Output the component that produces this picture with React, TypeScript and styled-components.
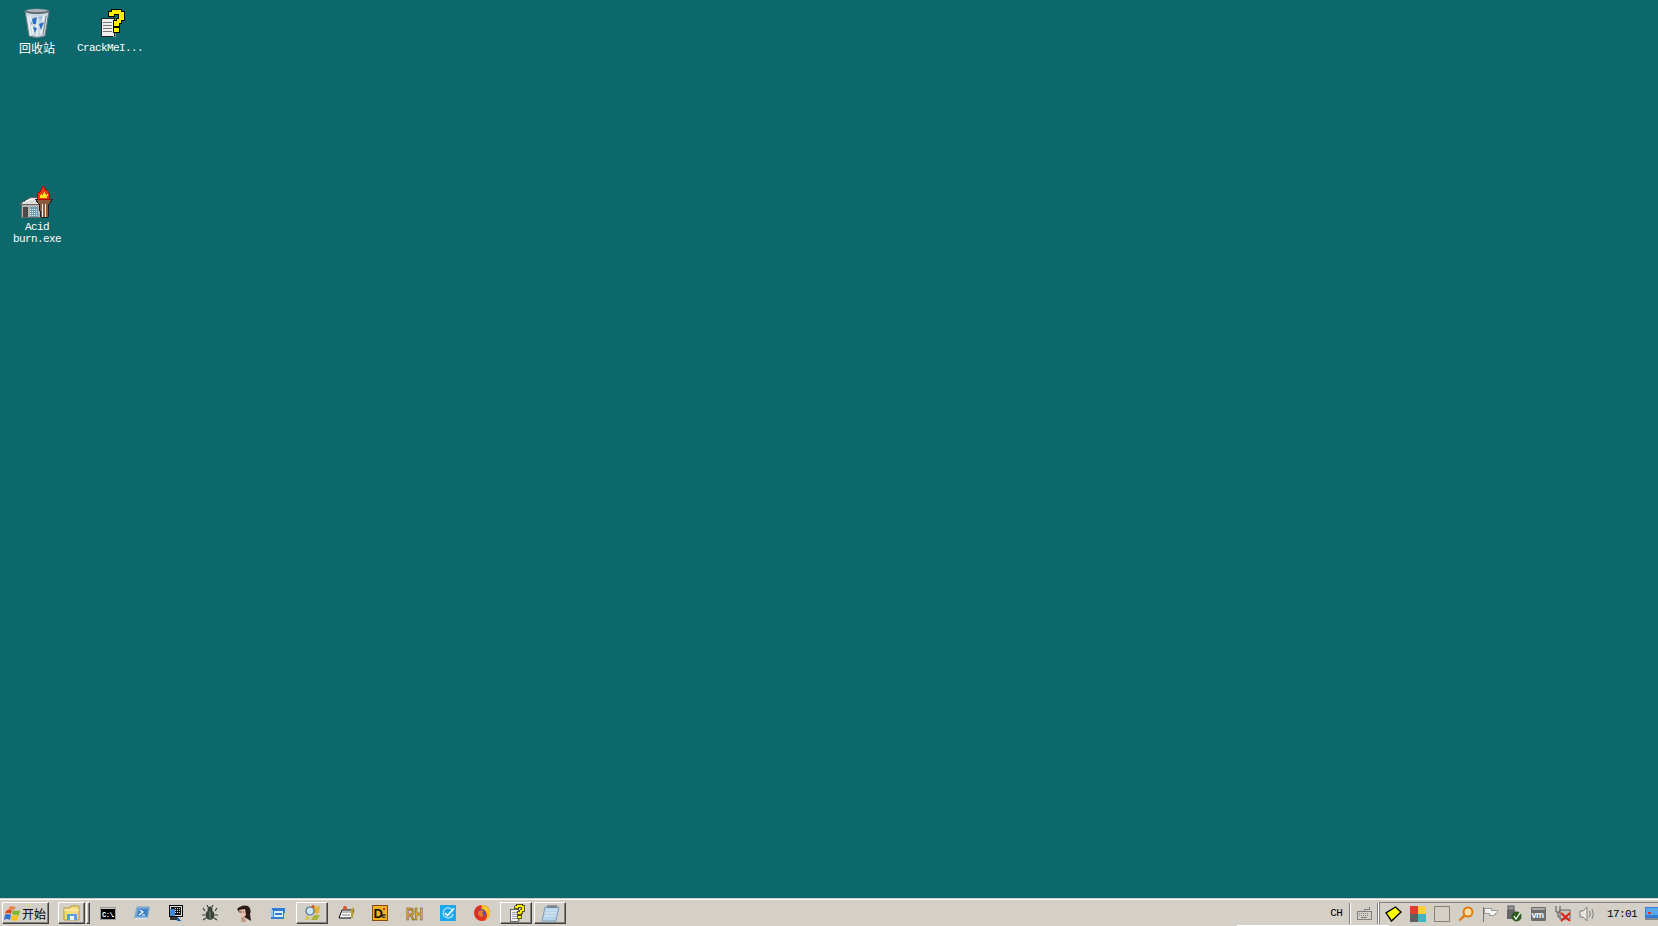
import React from 'react';
import styled, { createGlobalStyle } from 'styled-components';

const GlobalStyle = createGlobalStyle`
	html, body {
		margin: 0;
		height: 100%;
		overflow: hidden;
	}
	#root {
		height: 100%;
	}
`;

const Screen = styled.div`
	display: flex;
	flex-direction: column;
	width: 1658px;
	height: 926px;
	background: #0d686b;
	font-family: 'Liberation Mono', 'Noto Sans CJK SC', monospace;
`;

const Desktop = styled.div`
	position: relative;
	flex: 1;
`;

const DesktopIcon = styled.div<{ $x: number; $y: number; $gap: number }>`
	position: absolute;
	left: ${(p) => p.$x}px;
	top: ${(p) => p.$y}px;
	width: 72px;
	display: flex;
	flex-direction: column;
	align-items: center;
	gap: ${(p) => p.$gap}px;
`;

const IconLabel = styled.div<{ $cjk?: boolean }>`
	color: #fff;
	font-family: ${(p) => (p.$cjk ? "'Noto Sans CJK SC', sans-serif" : "'Liberation Mono', monospace")};
	font-size: ${(p) => (p.$cjk ? 12 : 11)}px;
	letter-spacing: ${(p) => (p.$cjk ? 0 : -0.6)}px;
	line-height: 12px;
	text-align: center;
	white-space: pre;
`;

const Taskbar = styled.div`
	position: relative;
	display: flex;
	align-items: center;
	flex: none;
	height: 28px;
	box-sizing: border-box;
	padding: 3px 0 2px 2px;
	background: #d4d0c8;
	border-top: 1px solid #d4d0c8;
	box-shadow: inset 0 1px 0 #fff;
`;

const BottomGlitch = styled.div`
	position: absolute;
	left: 1237px;
	bottom: 0;
	width: 152px;
	height: 1px;
	background: #fff;
`;

const raised = `
	box-sizing: border-box;
	background: #d4d0c8;
	border-top: 1px solid #fff;
	border-left: 1px solid #fff;
	border-right: 1px solid #404040;
	border-bottom: 1px solid #404040;
	box-shadow: inset -1px -1px 0 #808080;
`;

const StartButton = styled.div`
	${raised}
	display: flex;
	align-items: center;
	flex: none;
	gap: 1px;
	width: 47px;
	height: 22px;
	padding-left: 1px;
	font-family: 'Noto Sans CJK SC', sans-serif;
	font-size: 12px;
	color: #000;
	white-space: nowrap;
`;

const FolderButton = styled.div`
	${raised}
	display: flex;
	align-items: center;
	justify-content: center;
	flex: none;
	width: 27px;
	height: 22px;
	margin-left: 9px;
`;

const Grip = styled.div`
	${raised}
	flex: none;
	width: 4px;
	height: 22px;
	margin: 0 2px 0 1px;
`;

const Tile = styled.div<{ $raised?: boolean }>`
	display: flex;
	align-items: center;
	justify-content: center;
	flex: none;
	width: 32px;
	height: 22px;
	margin-right: 2px;
	${(p) => (p.$raised ? raised : '')}
`;

const Spacer = styled.div`
	flex: 1;
`;

const Lang = styled.div`
	flex: none;
	width: 19px;
	font-size: 11px;
	letter-spacing: -0.6px;
	line-height: 12px;
	color: #000;
`;

const Divider = styled.div`
	flex: none;
	width: 2px;
	height: 21px;
	box-sizing: border-box;
	border-left: 1px solid #808080;
	border-right: 1px solid #fff;
`;

const KeyboardSlot = styled.div`
	display: flex;
	justify-content: center;
	flex: none;
	width: 26px;
`;

const Tray = styled.div`
	display: flex;
	align-items: center;
	flex: none;
	height: 22px;
	box-sizing: border-box;
	padding-left: 1px;
	border-top: 1px solid #808080;
	border-left: 1px solid #808080;
`;

const TrayIcon = styled.div`
	display: flex;
	justify-content: center;
	flex: none;
	width: 24.2px;
`;

const Clock = styled.div`
	flex: none;
	width: 46px;
	text-align: right;
	padding-right: 8px;
	box-sizing: border-box;
	font-size: 11px;
	letter-spacing: -0.6px;
	color: #000;
`;

const Bin = () => (
	<svg width='32' height='32' viewBox='0 0 32 32'>
		<path d='M9 4 Q21 0 33 4 L29 29 Q21 32 13 29 Z' transform='translate(-5 0)' fill='#c6d5df' stroke='#68747c' />
		<ellipse cx='16' cy='4.5' rx='11.5' ry='2.6' fill='#56636b' />
		<ellipse cx='16' cy='3.6' rx='11' ry='1.6' fill='#dfe7ec' opacity='0.6' />
		<path d='M9 8 L12 27 M16 9 V29 M23 8 L20 27' stroke='#eef3f6' strokeWidth='1.5' />
		<path d='M11 12 L16 10 L15 17 L12 17 Z M18 17 L23 15 L20 23 Z M12 20 L16 21 L14 26 Z' fill='#2a6fc0' />
		<path d='M17 10 L21 9 L20 13 Z M9 15 L11 15 L11 19 Z' fill='#8fb8dc' />
		<path d='M7 9 L10 29' stroke='#fff' />
		<path d='M25 9 L22 28' stroke='#7d8a92' />
	</svg>
);

const CrackMe = ({ size }: { size: number }) => (
	<svg width={size} height={size} viewBox='0 0 32 32' shapeRendering='crispEdges'>
		<rect x='7' y='11' width='13' height='18' fill='#f0f0f0' stroke='#222' />
		<path d='M9 15 H18 M9 18 H18 M9 21 H18 M9 24 H18' stroke='#777' />
		<path d='M19 29 H21 V12' stroke='#888' fill='none' />
		<path
			d='M14 9 V4 H17 V2 H27 V4 H30 V13 H27 V16 H25 V19 H19 V13 H22 V11 H24 V7 H20 V9 Z'
			fill='#ffee00'
			stroke='#000'
		/>
		<rect x='19' y='20' width='6' height='5' fill='#ffee00' stroke='#000' />
	</svg>
);

const AcidBurn = () => (
	<svg width='34' height='32' viewBox='0 0 34 32' shapeRendering='crispEdges'>
		<rect x='1.5' y='17' width='19' height='14' fill='#b4b4b4' stroke='#666' />
		<path d='M0 18 L11 11 H20 V18 Z' fill='#dcdcdc' stroke='#666' />
		<path d='M3 17 L11 13 H19' stroke='#fff' fill='none' />
		<rect x='3' y='21' width='5' height='10' fill='#4a4a4a' />
		<rect x='10' y='21' width='8' height='10' fill='#6f9fb8' />
		<path d='M10 23 H18 M10 25 H18 M10 27 H18 M10 29 H18' stroke='#d8e8ee' strokeDasharray='1 1' />
		<path d='M15 13 H33 L29 18 L28 31 H21 L19 18 Z' fill='#8a5a3a' stroke='#222' />
		<path d='M22 18 V31 M25 18 V31' stroke='#eeeeee' />
		<path d='M18 13 Q16 7 20 6 Q22 3 23 0 Q25 2 26 4 Q30 5 30 13 Z' fill='#e8361a' stroke='#a01000' />
		<path d='M20 12 L21 7 L23 10 L24 5 L26 9 L28 8 L27 12 Z' fill='#ffe020' />
	</svg>
);

const WinFlag = () => (
	<svg width='17' height='16' viewBox='0 0 17 16'>
		<path d='M2 6 Q5 3 8 5 L7 9 Q4 7 1 9 Z' fill='#e2461f' />
		<path d='M9 5 Q12 7 16 5 L15 10 Q12 11 8 9 Z' fill='#7cb82f' />
		<path d='M1 10 Q4 8 7 10 L6 15 Q3 13 0 15 Z' fill='#2f6fd8' />
		<path d='M8 10 Q11 12 15 10 L13 16 Q10 16 7 15 Z' fill='#f5c118' />
		<path d='M5 2 Q9 0 12 3 L9 5 Q7 3 5 4 Z' fill='#ee7b3c' />
	</svg>
);

const Folder = () => (
	<svg width='18' height='16' viewBox='0 0 18 16'>
		<path d='M1 3 H7 L8 1 H16 V15 H1 Z' fill='#f7dc7e' stroke='#b59a45' />
		<rect x='4' y='9' width='10' height='6' fill='#5aa0d8' />
		<rect x='7' y='11' width='4' height='4' fill='#e8f2fa' />
		<path d='M1 5 H16' stroke='#fff4c0' />
	</svg>
);

const Cmd = () => (
	<svg width='16' height='13' viewBox='0 0 16 13' shapeRendering='crispEdges'>
		<rect x='0.5' y='0.5' width='15' height='12' fill='#000' stroke='#9a9a9a' />
		<rect x='1' y='1' width='14' height='1' fill='#c8c8c8' />
		<text x='2' y='10' fontSize='7' fontWeight='bold' fontFamily='Liberation Mono, monospace' fill='#fff' letterSpacing='-0.4'>
			C:\
		</text>
		<rect x='12' y='9' width='2' height='1' fill='#fff' />
	</svg>
);

const Shell = () => (
	<svg width='16' height='14' viewBox='0 0 16 14'>
		<path d='M3 1 H15.5 L13.5 12 H0.5 Z' fill='#6aa4d8' stroke='#8aa5bf' />
		<path d='M5 3 H14 L13 10 H3 Z' fill='#3f7fc4' />
		<path d='M6 4 L9 6 L5 9 M8 9 H11' stroke='#fff' strokeWidth='1.2' fill='none' />
		<path d='M1 12.5 H13' stroke='#d8e4ee' strokeWidth='1.5' />
	</svg>
);

const Monitor = () => (
	<svg width='16' height='17' viewBox='0 0 16 17' shapeRendering='crispEdges'>
		<rect x='1.5' y='0.5' width='13' height='11' fill='#ddd' stroke='#000' />
		<rect x='3' y='2' width='10' height='8' fill='#111' />
		<path d='M7 3 H12 M7 5 H12 M7 7 H12' stroke='#ddd' strokeDasharray='1 1' />
		<rect x='2' y='4' width='5' height='7' fill='#3f87d8' />
		<path d='M3 12 H9 L13 16 H10 Z' fill='#1e5fb0' />
		<rect x='2' y='12' width='7' height='3' fill='#333' />
	</svg>
);

const Bug = () => (
	<svg width='16' height='16' viewBox='0 0 16 16'>
		<ellipse cx='8' cy='10' rx='4.5' ry='5' fill='#37423a' />
		<circle cx='8' cy='4' r='2.5' fill='#37423a' />
		<path d='M3 6 L1 3 M13 6 L15 3 M3 10 H0 M13 10 H16 M4 13 L1 15 M12 13 L15 15 M6 2 L5 0 M10 2 L11 0' stroke='#37423a' strokeWidth='1.2' />
		<path d='M8 6 V15' stroke='#7b8a7c' />
	</svg>
);

const Portrait = () => (
	<svg width='16' height='17' viewBox='0 0 16 17'>
		<path d='M1 4 Q6 -1 12 1 Q16 4 14 9 L15 16 L10 13 L3 7 Z' fill='#2b1a16' />
		<path d='M3 5 L9 4 L10 10 L8 12 L5 11 Z' fill='#e6c0aa' />
		<path d='M5 12 H9 L10 17 H5 Z' fill='#c59a88' />
		<path d='M4 7 H8' stroke='#5a3a30' strokeDasharray='2 1' />
	</svg>
);

const Window = () => (
	<svg width='16' height='13' viewBox='0 0 16 13' shapeRendering='crispEdges'>
		<path d='M2 1 H15 L14 12 H1 Z' fill='#2f7fd8' />
		<rect x='4' y='4' width='9' height='6' fill='#dcecf8' />
		<rect x='5' y='6' width='7' height='2' fill='#2f7fd8' />
		<rect x='1' y='3' width='2' height='7' fill='#9cc8ec' />
	</svg>
);

const Search = () => (
	<svg width='17' height='17' viewBox='0 0 17 17'>
		<path d='M9 1 Q13 2 16 1 L15 8 Q12 9 9 8 Z' fill='#e3b23a' />
		<path d='M10 10 L16 10 L13 15 L7 15 Z' fill='#a8b43a' />
		<path d='M3 10 L1 15 L6 14 Z' fill='#d5c43c' />
		<circle cx='6' cy='6' r='4' fill='#cfe6f5' stroke='#4a6f8c' strokeWidth='1.2' />
		<circle cx='9' cy='1.5' r='1.5' fill='#d9541e' />
	</svg>
);

const Hdd = () => (
	<svg width='17' height='15' viewBox='0 0 17 15'>
		<path d='M4 4 H16 L13 12 H1 Z' fill='#fff' stroke='#000' />
		<path d='M3 6 H13 M4 9 H12' stroke='#777' />
		<path d='M13 3 L16 1 L15 12 L13 12 Z' fill='#b9a23a' />
		<circle cx='7' cy='2' r='2' fill='#d2562c' />
	</svg>
);

const Dbg = () => (
	<svg width='16' height='16' viewBox='0 0 16 16'>
		<rect x='0.5' y='0.5' width='15' height='15' fill='#f2b21e' stroke='#8a4a10' />
		<text x='1.5' y='13' fontSize='13' fontWeight='bold' fontFamily='Liberation Sans, sans-serif' fill='#111'>
			D
		</text>
		<text x='9.5' y='13' fontSize='8' fontWeight='bold' fontFamily='Liberation Sans, sans-serif' fill='#111'>
			e
		</text>
		<rect x='11' y='3' width='2' height='2' fill='#d0301a' />
	</svg>
);

const Rh = () => (
	<svg width='17' height='20' viewBox='0 0 17 20'>
		<text
			x='0'
			y='17'
			fontSize='17'
			fontWeight='bold'
			fontFamily='Liberation Sans, sans-serif'
			fill='#eeb23c'
			stroke='#4a3a20'
			strokeWidth='0.6'
			transform='scale(0.7 1)'
		>
			RH
		</text>
	</svg>
);

const Check = () => (
	<svg width='16' height='16' viewBox='0 0 16 16'>
		<rect width='16' height='16' fill='#1ba7ec' />
		<path d='M12.5 5.5 A5 5 0 1 0 13 9' stroke='#bfe6fa' strokeWidth='1.2' fill='none' />
		<path d='M5 8 L7.5 10.5 L14 3.5' stroke='#fff' strokeWidth='1.6' fill='none' />
	</svg>
);

const Firefox = () => (
	<svg width='16' height='16' viewBox='0 0 16 16'>
		<circle cx='8' cy='8' r='8' fill='#e0301e' />
		<path d='M7 0 A8 8 0 0 1 16 8 A8 8 0 0 1 11 15.4 Q14 12 12.5 8 Q11 4 7 4 Q9 2 7 0 Z' fill='#f8c828' />
		<circle cx='7.5' cy='8' r='3.8' fill='#4a4ec0' />
		<path d='M4 7 Q6 4 10 6 L8 8 Q11 10 8 12 Q5 12 4 9 Z' fill='#f2761b' />
	</svg>
);

const Note = () => (
	<svg width='19' height='17' viewBox='0 0 19 17'>
		<path d='M4 2 H18 L15 16 H1 Z' fill='#b6d2ea' stroke='#7f9cb8' />
		<path d='M5 5 H16 M4.3 8 H15.3 M3.6 11 H14.6' stroke='#dcebf7' />
		<path d='M7 0 V3 M9 0 V3 M11 0 V3 M13 0 V3 M15 0 V3' stroke='#556' />
	</svg>
);

const Keyboard = () => (
	<svg width='16' height='14' viewBox='0 0 16 14' shapeRendering='crispEdges'>
		<path d='M1 5 H15 V13 H1 Z' fill='#d4d0c8' stroke='#808080' />
		<path d='M3 7 H13 M3 9 H13' stroke='#808080' strokeDasharray='1 1' />
		<path d='M5 11 H11 M8 5 V3 H13 V1' stroke='#808080' fill='none' />
	</svg>
);

const Diamond = () => (
	<svg width='17' height='16' viewBox='0 0 17 16'>
		<path d='M1 6.8 L10.5 1 L16 6 L6.5 15 Z' fill='#ffff00' stroke='#000' strokeWidth='1.4' />
	</svg>
);

const Squares = () => (
	<svg width='16' height='16' viewBox='0 0 16 16' shapeRendering='crispEdges'>
		<rect x='0' y='0' width='8' height='8' fill='#e53a2c' />
		<rect x='8' y='0' width='8' height='8' fill='#f5d338' />
		<rect x='0' y='8' width='8' height='8' fill='#606060' />
		<rect x='8' y='8' width='8' height='8' fill='#3fb6bd' />
	</svg>
);

const EmptySquare = () => (
	<svg width='16' height='16' viewBox='0 0 16 16' shapeRendering='crispEdges'>
		<rect x='0.5' y='0.5' width='15' height='15' fill='none' stroke='#85827a' />
	</svg>
);

const Magnifier = () => (
	<svg width='16' height='16' viewBox='0 0 16 16'>
		<circle cx='10' cy='6' r='4.5' fill='#f6dfa8' stroke='#e0780c' strokeWidth='2' />
		<path d='M6.5 9.5 L1.5 14.5' stroke='#e0780c' strokeWidth='2.4' />
	</svg>
);

const Flag = () => (
	<svg width='16' height='16' viewBox='0 0 16 16' shapeRendering='crispEdges'>
		<path d='M1.5 1 V16' stroke='#777' />
		<path d='M2 2 H9 V4 H15 V7 L12 9 H7 V7 H2 Z' fill='#f4f4f4' stroke='#999' />
	</svg>
);

const Usb = () => (
	<svg width='16' height='17' viewBox='0 0 16 17'>
		<rect x='2' y='1' width='6' height='4' fill='#9a9a9a' stroke='#555' />
		<rect x='1' y='5' width='8' height='9' fill='#666' />
		<circle cx='10.5' cy='11.5' r='5' fill='#2d5c1e' />
		<path d='M8 11 L10 14 L14 8' stroke='#fff' strokeWidth='1.3' fill='none' />
	</svg>
);

const Vm = () => (
	<svg width='15' height='14' viewBox='0 0 15 14'>
		<rect width='15' height='14' rx='1' fill='#6c6c6c' />
		<rect x='1' y='1' width='13' height='2' fill='#aaa' />
		<text x='0.5' y='11' fontSize='9' fontWeight='bold' fontFamily='Liberation Sans, sans-serif' fill='#fff' letterSpacing='-0.5'>
			vm
		</text>
	</svg>
);

const Network = () => (
	<svg width='16' height='17' viewBox='0 0 16 17'>
		<path d='M1 1 V7 H5 V1 M3 7 V12 H7' stroke='#555' fill='none' />
		<rect x='5' y='5' width='10' height='9' fill='#c8c4bc' stroke='#666' />
		<path d='M6 8 L15 16 M15 8 L6 16' stroke='#e02010' strokeWidth='2' />
	</svg>
);

const Speaker = () => (
	<svg width='16' height='16' viewBox='0 0 16 16'>
		<path d='M1 5 H4 L8 1 V15 L4 11 H1 Z' fill='#e8e4dc' stroke='#808080' />
		<path d='M10.5 5 Q12 8 10.5 11 M13 3 Q15.5 8 13 13' stroke='#808080' fill='none' />
	</svg>
);

const ShowDesktop = () => (
	<svg width='13' height='13' viewBox='0 0 13 13' shapeRendering='crispEdges'>
		<rect width='13' height='11' fill='#2f7fd8' />
		<rect x='1' y='1' width='12' height='7' fill='#5aa8e8' />
		<rect x='3' y='5' width='3' height='2' fill='#d8362c' />
		<rect x='0' y='11' width='13' height='2' fill='#888' />
	</svg>
);

const quickLaunch: { icon: React.ReactNode; raised?: boolean }[] = [
	{ icon: <Cmd /> },
	{ icon: <Shell /> },
	{ icon: <Monitor /> },
	{ icon: <Bug /> },
	{ icon: <Portrait /> },
	{ icon: <Window /> },
	{ icon: <Search />, raised: true },
	{ icon: <Hdd /> },
	{ icon: <Dbg /> },
	{ icon: <Rh /> },
	{ icon: <Check /> },
	{ icon: <Firefox /> },
	{ icon: <CrackMe size={20} />, raised: true },
	{ icon: <Note />, raised: true },
];

const trayIcons = [
	<Diamond />,
	<Squares />,
	<EmptySquare />,
	<Magnifier />,
	<Flag />,
	<Usb />,
	<Vm />,
	<Network />,
	<Speaker />,
];

const App = () => {
	return (
		<>
			<GlobalStyle />
			<Screen>
				<Desktop>
					<DesktopIcon $x={1} $y={7} $gap={3}>
						<Bin />
						<IconLabel $cjk>回收站</IconLabel>
					</DesktopIcon>
					<DesktopIcon $x={74} $y={7} $gap={3}>
						<CrackMe size={32} />
						<IconLabel>CrackMeI...</IconLabel>
					</DesktopIcon>
					<DesktopIcon $x={1} $y={186} $gap={3}>
						<AcidBurn />
						<IconLabel>{'Acid\nburn.exe'}</IconLabel>
					</DesktopIcon>
				</Desktop>
				<Taskbar>
					<StartButton>
						<WinFlag />
						开始
					</StartButton>
					<FolderButton>
						<Folder />
					</FolderButton>
					<Grip />
					{quickLaunch.map((item, i) => (
						<Tile key={i} $raised={item.raised}>
							{item.icon}
						</Tile>
					))}
					<Spacer />
					<Lang>CH</Lang>
					<Divider />
					<KeyboardSlot>
						<Keyboard />
					</KeyboardSlot>
					<Divider />
					<Tray>
						{trayIcons.map((icon, i) => (
							<TrayIcon key={i}>{icon}</TrayIcon>
						))}
						<Clock>17:01</Clock>
						<ShowDesktop />
					</Tray>
					<BottomGlitch />
				</Taskbar>
			</Screen>
		</>
	);
};

export default App;
